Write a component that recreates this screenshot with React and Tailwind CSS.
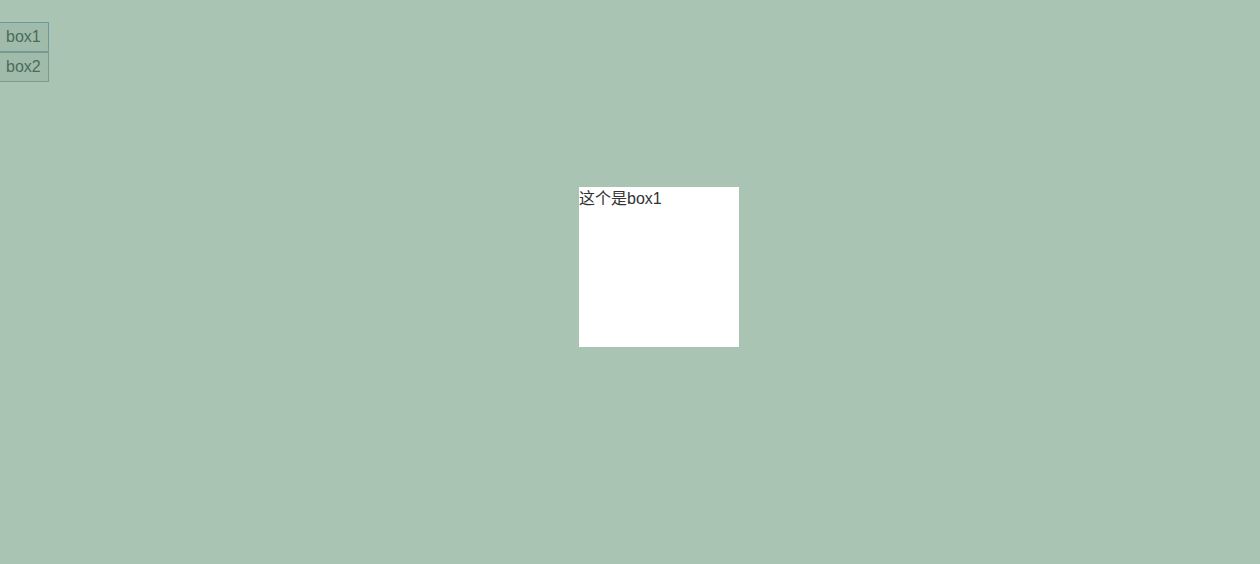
import React, { useState } from "react";

function App() {
    const [active, setActive] = useState("box1");

    const btn = "block h-[30px] -ml-px pl-[6px] pr-[7px] border text-[16px] leading-[18px] text-[#4a6b5a] bg-[#a0bba9]";

    return (
        <div className="min-h-screen h-[564px] bg-[#a9c4b2] font-['Liberation_Sans','Noto_Sans_CJK_SC',sans-serif] overflow-hidden">
            <div className="pt-[22px] flex flex-col items-start">
                <button
                    className={btn + " border-[#6e99a3]"}
                    onClick={() => setActive("box1")}
                >
                    box1
                </button>
                <button
                    className={btn + " border-[#7f9a88]"}
                    onClick={() => setActive("box2")}
                >
                    box2
                </button>
            </div>

            <div className="ml-[579px] mt-[105px] w-[160px] h-[160px] bg-white text-[16px] leading-[24px] text-[#333333]">
                这个是{active}
            </div>
        </div>
    );
}

export default App;
